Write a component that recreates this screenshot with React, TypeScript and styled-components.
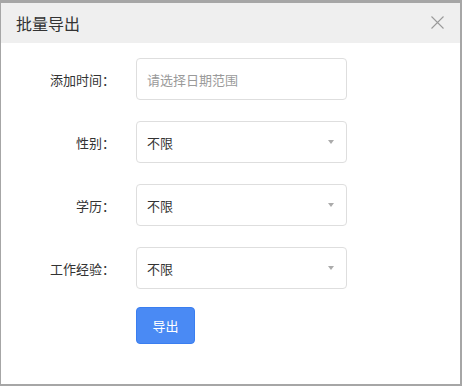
import React from 'react';
import styled, { createGlobalStyle } from 'styled-components';

const GlobalStyle = createGlobalStyle`
  html, body {
    margin: 0;
    padding: 0;
    background: #fff;
  }
  * {
    box-sizing: border-box;
  }
`;

const fields = [
  { label: '添加时间：', value: '请选择日期范围', placeholder: true, select: false },
  { label: '性别：', value: '不限', placeholder: false, select: true },
  { label: '学历：', value: '不限', placeholder: false, select: true },
  { label: '工作经验：', value: '不限', placeholder: false, select: true },
];

export default function App() {
  return (
    <>
      <GlobalStyle />
      <Dialog>
        <Header>
          <Title>批量导出</Title>
          <CloseButton aria-label="关闭">
            <svg width="13" height="13" viewBox="0 0 13 13" fill="none" stroke="#9a9a9a" strokeWidth="1.1">
              <path d="M0.5 0.5 L12.5 12.5 M12.5 0.5 L0.5 12.5" />
            </svg>
          </CloseButton>
        </Header>
        <Body>
          <Rows>
            {fields.map((f) => (
              <Row key={f.label}>
                <Label>{f.label}</Label>
                <Field>
                  <FieldText $placeholder={f.placeholder}>{f.value}</FieldText>
                  {f.select && <Caret />}
                </Field>
              </Row>
            ))}
          </Rows>
          <ButtonRow>
            <ExportButton>导出</ExportButton>
          </ButtonRow>
        </Body>
      </Dialog>
    </>
  );
}

const Dialog = styled.div`
  width: 462px;
  height: 386px;
  display: flex;
  flex-direction: column;
  border-style: solid;
  border-color: #a6a6a6;
  border-width: 3px 2px 2px 1px;
  background: #fff;
  font-family: "Noto Sans CJK SC", "Liberation Sans", sans-serif;
  overflow: hidden;
`;

const Header = styled.div`
  height: 40px;
  flex-shrink: 0;
  display: flex;
  align-items: center;
  justify-content: space-between;
  padding: 0 16px 0 15px;
  background: #efefef;
`;

const Title = styled.div`
  font-size: 16px;
  color: #333;
  line-height: 1;
`;

const CloseButton = styled.button`
  display: flex;
  align-items: center;
  justify-content: center;
  width: 13px;
  height: 13px;
  padding: 0;
  margin-top: -1px;
  border: none;
  background: transparent;
  cursor: pointer;
`;

const Body = styled.div`
  padding-top: 15px;
  display: flex;
  flex-direction: column;
`;

const Rows = styled.div`
  display: flex;
  flex-direction: column;
  gap: 21px;
`;

const Row = styled.div`
  display: flex;
  align-items: center;
`;

const Label = styled.div`
  width: 114px;
  margin-right: 21px;
  text-align: right;
  font-size: 13px;
  color: #333;
`;

const Field = styled.div`
  width: 211px;
  height: 42px;
  display: flex;
  align-items: center;
  justify-content: space-between;
  padding: 0 12px 0 10px;
  border: 1px solid #dedede;
  border-radius: 4px;
  background: #fff;
`;

const FieldText = styled.span<{ $placeholder: boolean }>`
  font-size: 13px;
  color: ${(p) => (p.$placeholder ? '#9a9a9a' : '#333')};
`;

const Caret = styled.span`
  width: 0;
  height: 0;
  border-left: 3px solid transparent;
  border-right: 3px solid transparent;
  border-top: 4px solid #ababab;
`;

const ButtonRow = styled.div`
  margin-top: 18px;
  padding-left: 135px;
`;

const ExportButton = styled.button`
  width: 59px;
  height: 37px;
  border: 1px solid #3a7ef0;
  border-radius: 4px;
  background: #4a8af4;
  color: #fff;
  font-family: inherit;
  font-size: 13px;
  cursor: pointer;
`;
